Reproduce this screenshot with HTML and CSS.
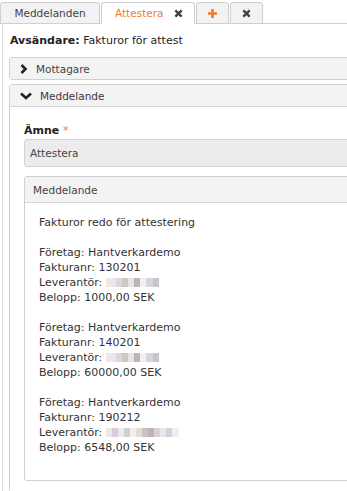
FILE: index.html
```html
<!DOCTYPE html>
<html lang="sv">
<head>
<meta charset="utf-8">
<title>Attestera</title>
<link rel="stylesheet" href="styles.css">
</head>
<body>
<div class="page">
  <div class="tabs">
    <div class="tab">Meddelanden</div>
    <div class="tab active">Attestera
      <svg class="x" width="9" height="9" viewBox="0 0 10 10"><path d="M1.5 1.5l7 7M8.5 1.5l-7 7" stroke="#3a3f44" stroke-width="2.6"/></svg>
    </div>
    <div class="tab icon plus">
      <svg width="11" height="11" viewBox="0 0 11 11"><path d="M5.5 1v9M1 5.5h9" stroke="#f47a2a" stroke-width="2.6"/></svg>
    </div>
    <div class="tab icon">
      <svg width="9" height="9" viewBox="0 0 10 10"><path d="M1.5 1.5l7 7M8.5 1.5l-7 7" stroke="#3a3f44" stroke-width="2.6"/></svg>
    </div>
  </div>
  <div class="content">
    <div class="sender"><b>Avsändare:</b> Fakturor för attest</div>
    <div class="panel">
      <div class="panel-head">
        <svg class="chev" width="8" height="10" viewBox="0 0 8 10"><path d="M1.5 1l4 4-4 4" fill="none" stroke="#222" stroke-width="2.6"/></svg>
        <span>Mottagare</span>
      </div>
    </div>
    <div class="panel open">
      <div class="panel-head">
        <svg class="chev down" width="12" height="8" viewBox="0 0 12 8"><path d="M1 1.5l5 4.5 5-4.5" fill="none" stroke="#222" stroke-width="2.6"/></svg>
        <span class="head-text">Meddelande</span>
      </div>
      <div class="panel-body">
        <label class="field-label">Ämne <span class="req">*</span></label>
        <div class="input">Attestera</div>
        <div class="box">
          <div class="box-head">Meddelande</div>
          <div class="box-body">
            <p>Fakturor redo för attestering</p>
            <p>Företag: Hantverkardemo<br>Fakturanr: 130201<br>Leverantör: <span class="blur b1"></span><br>Belopp: 1000,00 SEK</p>
            <p>Företag: Hantverkardemo<br>Fakturanr: 140201<br>Leverantör: <span class="blur b1"></span><br>Belopp: 60000,00 SEK</p>
            <p>Företag: Hantverkardemo<br>Fakturanr: 190212<br>Leverantör: <span class="blur b3"></span><br>Belopp: 6548,00 SEK</p>
          </div>
        </div>
      </div>
    </div>
  </div>
</div>
</body>
</html>
```
FILE: styles.css
```css
html, body {
  margin: 0;
  padding: 0;
  overflow: hidden;
  background: #fff;
}
body {
  font-family: "DejaVu Sans", "Liberation Sans", sans-serif;
  font-size: 11px;
  color: #333;
}
.page {
  width: 420px;
}
.tabs {
  display: flex;
  align-items: flex-end;
  height: 22px;
  padding-top: 1px;
  border-bottom: 1px solid #cfcfcf;
  gap: 1px;
}
.tab {
  box-sizing: border-box;
  height: 22px;
  margin-bottom: -1px;
  border: 1px solid #cfcfcf;
  border-radius: 3px 3px 0 0;
  background: #f2f2f2;
  color: #444;
  font-size: 10.5px;
  display: flex;
  align-items: center;
  justify-content: center;
  width: 100px;
}
.tab.active {
  width: 94px;
  background: #fff;
  border-bottom-color: #fff;
  color: #f47a2a;
  justify-content: flex-start;
  padding-left: 13px;
  gap: 10px;
}
.tab.icon {
  width: 33px;
}
.content {
  margin-left: 2px;
  border-left: 1px solid #dcdcdc;
  padding: 10px 0 0 6px;
  min-height: 480px;
}
.sender {
  padding-left: 1px;
  font-size: 11px;
  line-height: 14px;
  color: #222;
}
.panel {
  border: 1px solid #d0d0d0;
  border-radius: 3px;
  margin-top: 9px;
}
.panel + .panel {
  margin-top: 4px;
}
.panel-head {
  height: 21px;
  background: #f3f3f3;
  display: flex;
  align-items: center;
  padding-left: 10px;
  color: #444;
  font-size: 10.5px;
}
.panel-head span {
  margin-left: 8px;
}
.panel.open .panel-head {
  border-bottom: 1px solid #d8d8d8;
}
.panel.open .panel-head span {
  color: #4a3048;
}
.panel-body {
  padding: 17px 14px 10px 14px;
  background: #fff;
}
.field-label {
  display: block;
  font-weight: bold;
  color: #222;
  font-size: 11px;
  line-height: 14px;
  margin-bottom: 1px;
}
.req {
  color: #f47a2a;
  font-weight: normal;
}
.input {
  box-sizing: border-box;
  height: 28px;
  border: 1px solid #d2d2d2;
  border-radius: 3px;
  background: #ececec;
  padding-left: 5px;
  display: flex;
  align-items: center;
  color: #444;
  font-size: 10.5px;
}
.box {
  margin-top: 9px;
  border: 1px solid #d0d0d0;
  border-radius: 3px;
}
.box-head {
  height: 25px;
  background: #f3f3f3;
  border-bottom: 1px solid #d8d8d8;
  display: flex;
  align-items: center;
  padding-left: 8px;
  color: #444;
  font-size: 10.5px;
}
.box-body {
  padding: 12px 14px 25px;
  line-height: 15px;
  color: #333;
}
.box-body p {
  margin: 0 0 15px;
}
.box-body p:last-child {
  margin-bottom: 0;
}
.blur {
  display: inline-block;
  height: 9px;
  vertical-align: -1px;
  width: 53px;
  background: linear-gradient(90deg, #f3e6dc 0 4px, #e8e8ee 4px 10px, #dcd8d8 10px 16px, #cfc8c0 16px 22px, #e6e4e6 22px 28px, #bfb4ae 28px 34px, #eef0f2 34px 40px, #d4d8dc 40px 47px, #c6c6cc 47px 53px);
}
.blur.b3 {
  width: 73px;
  background: linear-gradient(90deg, #ece6ea 0 6px, #d8ccd8 6px 12px, #eceaec 12px 18px, #cfcfd2 18px 24px, #f2efe8 24px 30px, #e3ddd2 30px 36px, #c9c2c2 36px 42px, #c1b0c0 42px 48px, #d6d3d3 48px 54px, #e4e8ee 54px 60px, #cfd4d8 60px 66px, #eef0f2 66px 73px);
}
```
